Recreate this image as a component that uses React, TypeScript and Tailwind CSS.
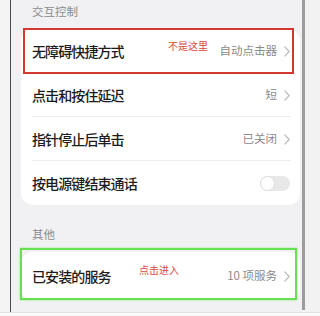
import React from "react";

const font = { fontFamily: '"Noto Sans CJK SC", "Noto Sans", sans-serif' };

function Chevron() {
  return (
    <svg width="6" height="11" viewBox="0 0 6 11" className="shrink-0">
      <polyline points="0.8,0.8 5.2,5.5 0.8,10.2" fill="none" stroke="#b8b8b8" strokeWidth="1.1" strokeLinecap="round" strokeLinejoin="round" />
    </svg>
  );
}

function Row({ title, value, divider = true, toggle = false, h = "h-[44px]" }: { title: string; value?: string; divider?: boolean; toggle?: boolean; h?: string }) {
  return (
    <div className={`relative flex items-center justify-between pl-[11px] pr-[10px] ${h}`}>
      <span className="text-[14px] tracking-[-0.9px] font-medium text-[#1c1c1c] leading-none">{title}</span>
      {toggle ? (
        <div className="relative w-[30px] h-[15px] rounded-full bg-[#e8e8e8]">
          <div className="absolute left-0 top-0 w-[15px] h-[15px] rounded-full bg-white border border-[#dcdcdc]" />
        </div>
      ) : (
        <div className="flex items-center gap-[7px]">
          <span className="text-[11.5px] text-[#8a8a8a] leading-none">{value}</span>
          <Chevron />
        </div>
      )}
      {divider && <div className="absolute left-[11px] right-[9px] bottom-0 h-px bg-[#ececec]" />}
    </div>
  );
}

export default function App() {
  return (
    <div className="w-[320px] h-[316px] bg-[#f7f7f7] flex flex-col overflow-hidden" style={font}>
      <div className="flex h-[312px]">
        <div className="w-[10px] bg-[#f4f4f4]" />
        <div className="w-px bg-[#4a4a4a]" />
        <div className="relative w-[291px] bg-[#f1f1f3] pl-[10px] pr-[2px]">
          <div className="h-[24px] flex items-center pl-[11px] text-[11.5px] text-[#8c8c8c]">交互控制</div>
          <div className="mt-[5px] bg-white rounded-[12px] overflow-hidden">
            <Row title="无障碍快捷方式" value="自动点击器" />
            <Row title="点击和按住延迟" value="短" />
            <Row title="指针停止后单击" value="已关闭" />
            <Row title="按电源键结束通话" toggle divider={false} />
          </div>
          <div className="mt-[18px] h-[24px] flex items-center pl-[11px] text-[11.5px] text-[#8c8c8c]">其他</div>
          <div className="mt-[5px] bg-white rounded-[12px] overflow-hidden">
            <Row title="已安装的服务" value="10 项服务" divider={false} h="h-[48px]" />
          </div>

          {/* annotations */}
          <div className="absolute left-[12px] top-[28px] w-[271px] h-[46px] border-2 border-[#d3392e]" />
          <div className="absolute left-[157px] top-[41px] text-[10px] leading-none text-[#d9483c]">不是这里</div>
          <div className="absolute left-[9px] top-[248px] w-[277px] h-[52px] border-[2.5px] border-[#66e052] shadow-[0_0_2px_#8be87a]" />
          <div className="absolute left-[128px] top-[265px] text-[10px] leading-none text-[#d9483c]">点击进入</div>
        </div>
        <div className="w-[3px] h-[310px] bg-[#9c9c9c]" />
        <div className="flex-1 bg-[#f2f2f2]" />
      </div>
      <div className="h-px bg-[#e2e2e2]" />
      <div className="flex-1 bg-[#fafafa]" />
    </div>
  );
}
